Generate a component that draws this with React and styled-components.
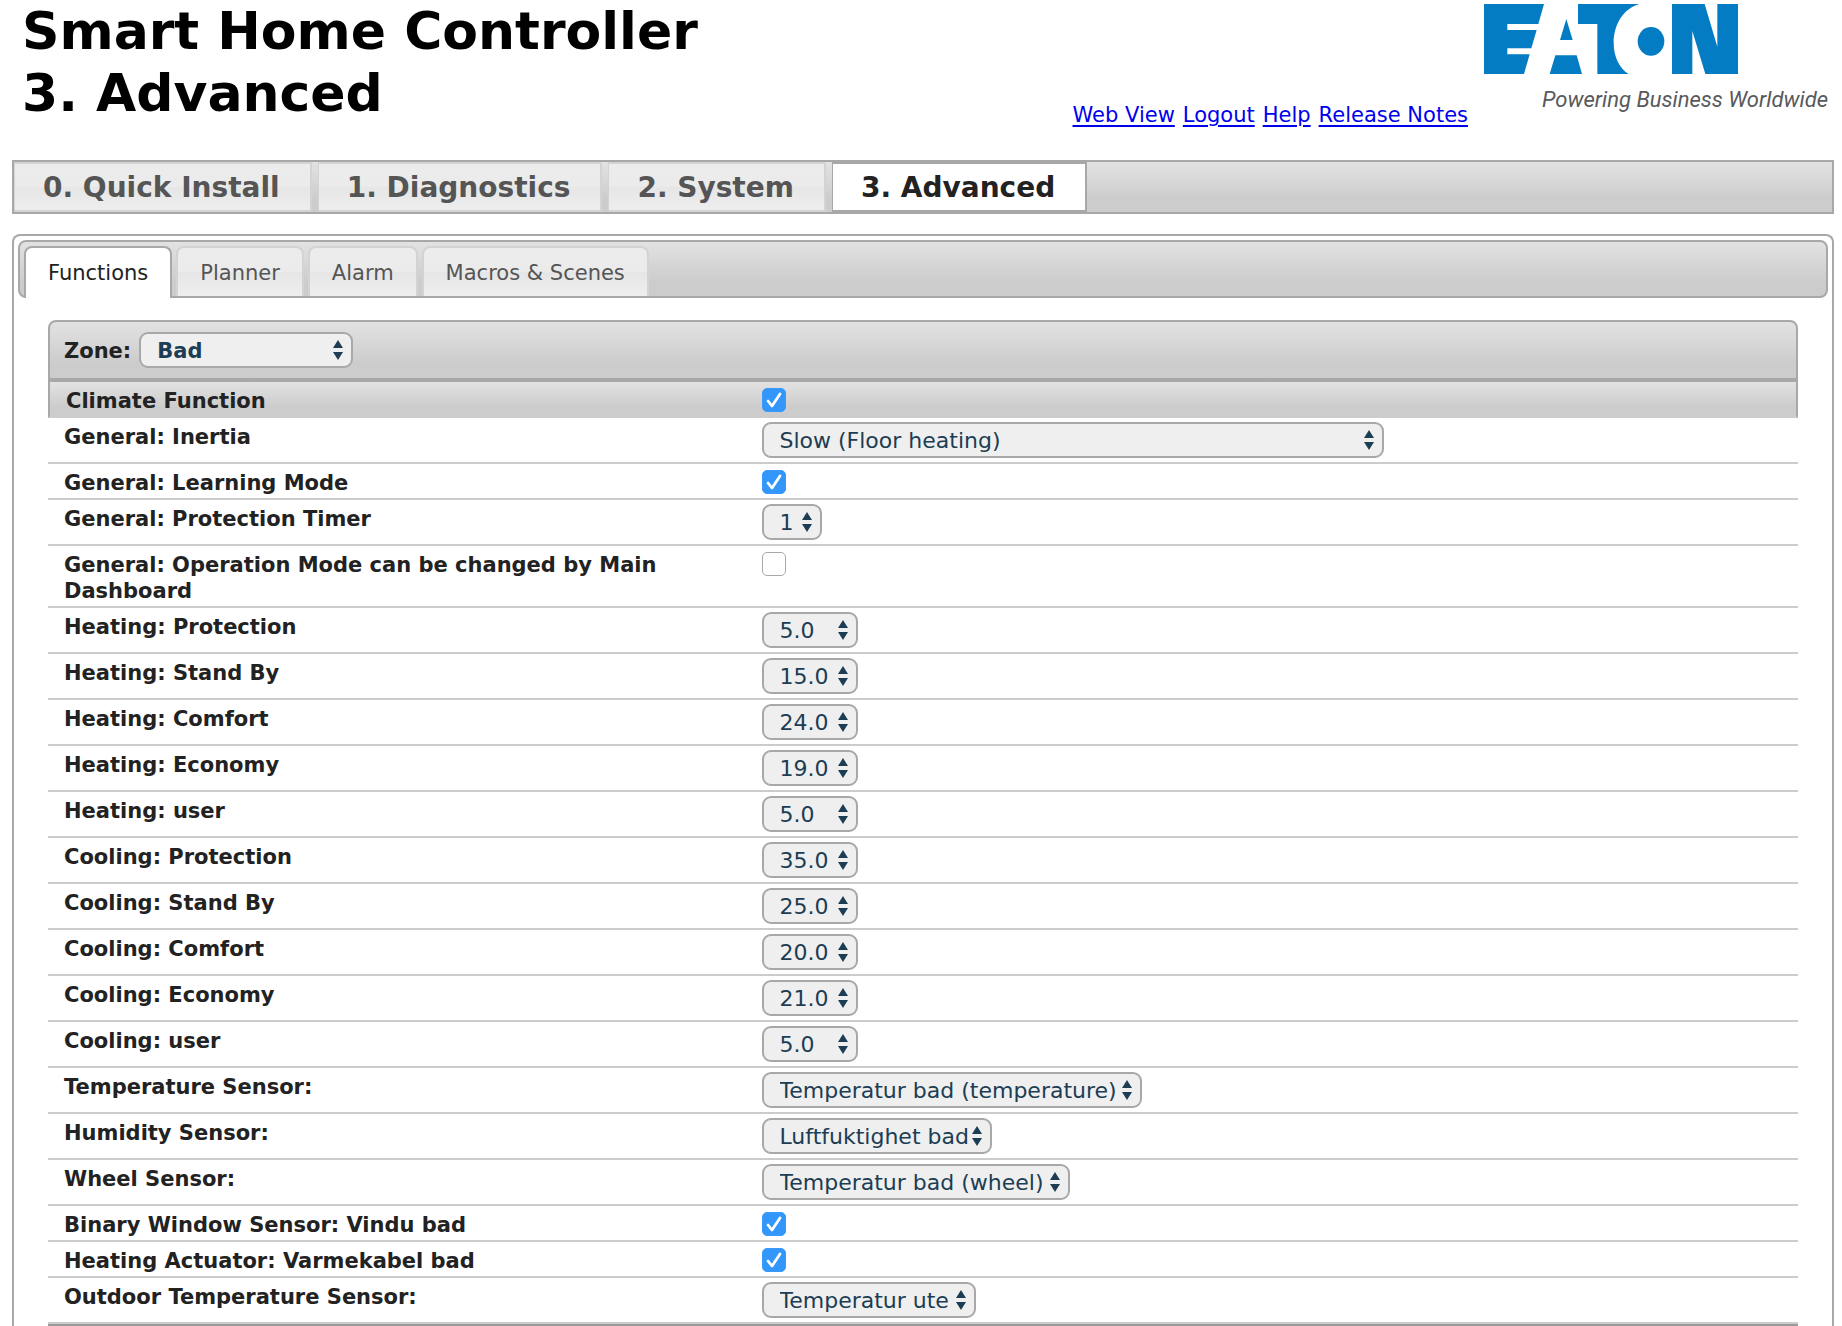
import React from 'react'
import styled, {createGlobalStyle, css} from 'styled-components'

const Color = {
  border: '#a8a8a8',
  line: '#cccccc',
  text: '#222222',
  muted: '#555555',
  control: '#1c3d53',
  brand: '#047cc4',
}

const HeaderGradient = css`
  background: linear-gradient(#e2e2e2, #cccccc 75%);
`

const TabGradient = css`
  background: linear-gradient(#ececec, #ebebeb 50%, #e6e6e6 51%, #eeeeee);
`

const svgUrl = (svg) => `url("data:image/svg+xml,${encodeURIComponent(svg)}")`

const arrows = svgUrl(
  `<svg xmlns="http://www.w3.org/2000/svg" width="10" height="20"><path fill="${Color.control}" d="M5 0 10 8H0ZM0 12H10L5 20Z"/></svg>`
)

const tick = svgUrl(
  '<svg xmlns="http://www.w3.org/2000/svg" width="24" height="24"><path fill="none" stroke="#fff" stroke-width="2.8" stroke-linecap="round" stroke-linejoin="round" d="M6 13 10 18 18 6"/></svg>'
)

const links = ['Web View', 'Logout', 'Help', 'Release Notes']
const sections = ['0. Quick Install', '1. Diagnostics', '2. System', '3. Advanced']
const tabs = ['Functions', 'Planner', 'Alarm', 'Macros & Scenes']

const settings = [
  {label: 'General: Inertia', value: 'Slow (Floor heating)', width: 622},
  {label: 'General: Learning Mode', checked: true},
  {label: 'General: Protection Timer', value: '1', width: 60},
  {label: 'General: Operation Mode can be changed by Main Dashboard', checked: false},
  {label: 'Heating: Protection', value: '5.0', width: 96},
  {label: 'Heating: Stand By', value: '15.0', width: 96},
  {label: 'Heating: Comfort', value: '24.0', width: 96},
  {label: 'Heating: Economy', value: '19.0', width: 96},
  {label: 'Heating: user', value: '5.0', width: 96},
  {label: 'Cooling: Protection', value: '35.0', width: 96},
  {label: 'Cooling: Stand By', value: '25.0', width: 96},
  {label: 'Cooling: Comfort', value: '20.0', width: 96},
  {label: 'Cooling: Economy', value: '21.0', width: 96},
  {label: 'Cooling: user', value: '5.0', width: 96},
  {label: 'Temperature Sensor:', value: 'Temperatur bad (temperature)', width: 380},
  {label: 'Humidity Sensor:', value: 'Luftfuktighet bad', width: 230},
  {label: 'Wheel Sensor:', value: 'Temperatur bad (wheel)', width: 308},
  {label: 'Binary Window Sensor: Vindu bad', checked: true},
  {label: 'Heating Actuator: Varmekabel bad', checked: true},
  {label: 'Outdoor Temperature Sensor:', value: 'Temperatur ute', width: 214},
]

function Logo() {
  return (
    <Brand>
      <svg width="254" height="70" viewBox="72 12 762 210" fill={Color.brand} role="img" aria-label="Eaton">
        <path d="M72 12H252L235 72H142V90H230L214 145H142V163H209L192 222H72Z" />
        <path d="M319 57 338 120H300ZM286 166H350L366 222H269Z" />
        <path d="M354 12H538C490 25 461 75 461 128C461 170 478 205 506 222H412V72H354Z" />
        <ellipse cx="573" cy="124" rx="40" ry="43" />
        <path d="M636 12H734L772 140V12H834V222H736L697 93V222H636Z" />
      </svg>
      <Tagline>Powering Business Worldwide</Tagline>
    </Brand>
  )
}

function Setting({id, label, value, width, checked}) {
  return (
    <Row>
      <Label htmlFor={id}>{label}</Label>
      {value ? (
        <Select id={id} $width={width} defaultValue={value}>
          <option>{value}</option>
        </Select>
      ) : (
        <Checkbox id={id} type="checkbox" defaultChecked={checked} />
      )}
    </Row>
  )
}

function App() {
  return (
    <Page>
      <GlobalStyle />
      <Header>
        <Title>Smart Home Controller<br />3. Advanced</Title>
        <Links>
          {links.map((link) => (
            <Link key={link} href="#">{link}</Link>
          ))}
        </Links>
        <Logo />
      </Header>
      <SectionBar>
        {sections.map((section, index) => (
          <Section key={section} type="button" $active={index === 3}>{section}</Section>
        ))}
      </SectionBar>
      <Panel>
        <TabBar>
          {tabs.map((tab, index) => (
            <Tab key={tab} type="button" $active={index === 0}>{tab}</Tab>
          ))}
        </TabBar>
        <Content>
          <ZoneBar>
            <ZoneLabel htmlFor="zone">Zone:</ZoneLabel>
            <Select id="zone" $width={214} $bold defaultValue="Bad">
              <option>Bad</option>
            </Select>
          </ZoneBar>
          <FunctionRow>
            <Label htmlFor="climate">Climate Function</Label>
            <Checkbox id="climate" type="checkbox" defaultChecked />
          </FunctionRow>
          {settings.map((setting, index) => (
            <Setting key={setting.label} id={`setting-${index}`} {...setting} />
          ))}
          <NextSection />
        </Content>
      </Panel>
    </Page>
  )
}

const GlobalStyle = createGlobalStyle`
  * {
    box-sizing: border-box;
  }
  body {
    margin: 0;
    background: #fff;
    color: ${Color.text};
    font-family: "DejaVu Sans", Verdana, sans-serif;
    font-size: 21px;
    line-height: 26px;
  }
  button, select, input {
    font: inherit;
    margin: 0;
  }
`

const Page = styled.div`
  padding: 0 8px 0 12px;
`

const Header = styled.header`
  display: flex;
  align-items: flex-start;
  height: 160px;
`

const Title = styled.h1`
  margin: 0;
  padding-left: 10px;
  color: #000;
  font-size: 52px;
  line-height: 62px;
  white-space: nowrap;
`

const Links = styled.nav`
  display: flex;
  gap: 8px;
  margin-left: auto;
  padding-top: 102px;
  white-space: nowrap;
`

const Link = styled.a`
  color: #0000ee;
  text-decoration: underline;
  text-decoration-thickness: 2px;
  text-underline-offset: 3px;
`

const Brand = styled.div`
  display: flex;
  flex: none;
  flex-direction: column;
  width: 366px;
  padding: 4px 6px 0 16px;
`

const Tagline = styled.span`
  align-self: flex-end;
  padding-top: 10px;
  color: #58595b;
  font-family: Roboto, "Liberation Sans", sans-serif;
  font-size: 22px;
  font-style: italic;
  line-height: 32px;
  white-space: nowrap;
`

const SectionBar = styled.nav`
  display: flex;
  gap: 6px;
  height: 54px;
  border: 2px solid ${Color.border};
  ${HeaderGradient}
`

const Section = styled.button`
  padding: 2px 30px 0 28px;
  border: 2px solid #d3d3d3;
  border-left-width: 1px;
  ${TabGradient}
  color: ${Color.muted};
  font-size: 28px;
  font-weight: bold;
  line-height: 32px;
  white-space: nowrap;
  ${({$active}) => $active && css`
    border-color: ${Color.border};
    background: #fff;
    color: ${Color.text};
  `}
`

const Panel = styled.main`
  margin-top: 20px;
  padding: 4px 4px 0;
  border: 2px solid ${Color.border};
  border-bottom: 0;
  border-radius: 8px 8px 0 0;
`

const TabBar = styled.nav`
  display: flex;
  gap: 4px;
  height: 58px;
  padding: 4px 4px 0;
  border: 2px solid ${Color.border};
  border-radius: 8px;
  ${HeaderGradient}
`

const Tab = styled.button`
  height: 50px;
  padding: 2px 22px 0;
  border: 2px solid #d3d3d3;
  border-bottom: 0;
  border-radius: 8px 8px 0 0;
  ${TabGradient}
  color: ${Color.muted};
  white-space: nowrap;
  ${({$active}) => $active && css`
    height: 52px;
    padding-bottom: 2px;
    border-color: ${Color.border};
    background: #fff;
    color: ${Color.text};
  `}
`

const Content = styled.section`
  padding: 22px 30px 0;
`

const ZoneBar = styled.div`
  display: flex;
  align-items: center;
  gap: 8px;
  height: 60px;
  padding: 0 14px;
  border: 2px solid ${Color.border};
  border-radius: 8px 8px 0 0;
  ${HeaderGradient}
`

const ZoneLabel = styled.label`
  padding-top: 2px;
  font-weight: bold;
`

const Row = styled.div`
  display: grid;
  grid-template-columns: 40.6% 1fr;
  align-items: start;
  padding: 0 16px;
  border-bottom: 2px solid ${Color.line};
`

const FunctionRow = styled(Row)`
  border: 2px solid ${Color.border};
  border-bottom-color: ${Color.line};
  ${HeaderGradient}
`

const NextSection = styled.div`
  height: 2px;
  background: #9a9a9a;
`

const Label = styled.label`
  padding: 6px 24px 2px 0;
  font-weight: bold;
`

const Select = styled.select`
  appearance: none;
  width: ${({$width}) => $width}px;
  height: 36px;
  padding: 1px 0 0 16px;
  border: 2px solid ${Color.border};
  border-radius: 9px;
  background: #efefef ${arrows} no-repeat right 8px center;
  color: ${Color.control};
  font-size: ${({$bold}) => $bold ? 21 : 22}px;
  font-weight: ${({$bold}) => $bold ? 'bold' : 'normal'};
  ${Row} & {
    margin: 4px 0;
  }
`

const Checkbox = styled.input`
  appearance: none;
  width: 24px;
  height: 24px;
  border: 1px solid #a9a9a9;
  border-radius: 5px;
  background: #fff;
  &:checked {
    border-color: #3b99fc;
    background: #3296fb ${tick} center no-repeat;
  }
  ${Row} & {
    margin: 6px 0 4px;
  }
`

export default App
